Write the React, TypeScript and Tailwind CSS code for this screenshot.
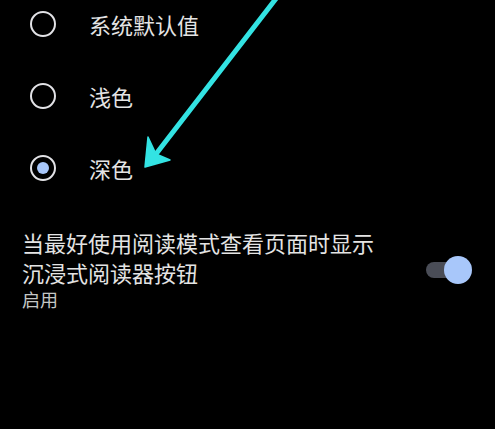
const OPTIONS = [
  { label: '系统默认值', checked: false },
  { label: '浅色', checked: false },
  { label: '深色', checked: true },
]

function Radio({ checked }: { checked: boolean }) {
  return (
    <div className="w-[26px] h-[26px] rounded-full border-[2.5px] border-[#e2e2e6] flex items-center justify-center">
      {checked && <div className="w-[12px] h-[12px] rounded-full bg-[#a8c7fa]" />}
    </div>
  )
}

function Arrow() {
  return (
    <svg className="absolute left-0 top-0 pointer-events-none" width={495} height={429}>
      <defs>
        <filter id="glow" x="-20%" y="-20%" width="140%" height="140%">
          <feGaussianBlur stdDeviation="1.2" />
        </filter>
      </defs>
      <g fill="#33e3e3" stroke="#33e3e3">
        <line x1={278} y1={-4} x2={156} y2={154} strokeWidth={5} strokeLinecap="round" />
        <polygon points="145,167 148,137 156,154 170,160" strokeWidth={1.5} strokeLinejoin="round" />
      </g>
    </svg>
  )
}

export default function App() {
  return (
    <div
      className="relative w-[495px] h-[429px] bg-black overflow-hidden text-[#e4e4e4]"
      style={{ fontFamily: '"Noto Sans CJK SC", "Noto Sans", sans-serif' }}
    >
      {/* Theme radios */}
      <div className="flex flex-col gap-[24px]">
        {OPTIONS.map(({ label, checked }) => (
          <div key={label} className="h-[48px] flex items-center pl-[30px]">
            <Radio checked={checked} />
            <span className="ml-[33px] text-[22px] leading-[30px]">{label}</span>
          </div>
        ))}
      </div>

      {/* Reader mode setting */}
      <div className="mt-[36px] flex items-center pl-[22px] pr-[23px]">
        <div className="flex-1">
          <div className="text-[22px] leading-[29.5px] w-[360px]">
            当最好使用阅读模式查看页面时显示沉浸式阅读器按钮
          </div>
          <div className="text-[18px] leading-[24px] text-[#c4c7c5]">启用</div>
        </div>
        <div className="relative w-[46px] h-[28px] flex items-center">
          <div className="w-[44px] h-[16px] rounded-full bg-[#4a4d57]" />
          <div className="absolute right-0 w-[28px] h-[28px] rounded-full bg-[#a8c7fa]" />
        </div>
      </div>

      <Arrow />
    </div>
  )
}
